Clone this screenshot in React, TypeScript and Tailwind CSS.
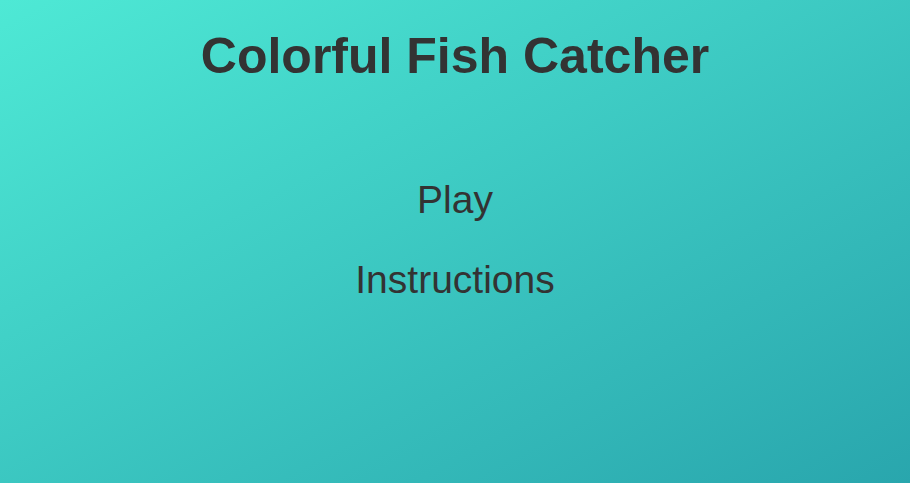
export default function App() {
  return (
    <div className="min-h-screen w-full bg-gradient-to-br from-[#4ee9d5] to-[#29a6ad] flex flex-col items-center pt-[26px] font-['Liberation_Sans',Arial,sans-serif] text-[#333333]">
      <h1 className="text-[50px] leading-[60px] font-bold">Colorful Fish Catcher</h1>
      <div className="flex flex-col items-center mt-[74px]">
        <button className="text-[39px] leading-[80px] cursor-pointer">Play</button>
        <button className="text-[39px] leading-[80px] cursor-pointer">Instructions</button>
      </div>
    </div>
  )
}
